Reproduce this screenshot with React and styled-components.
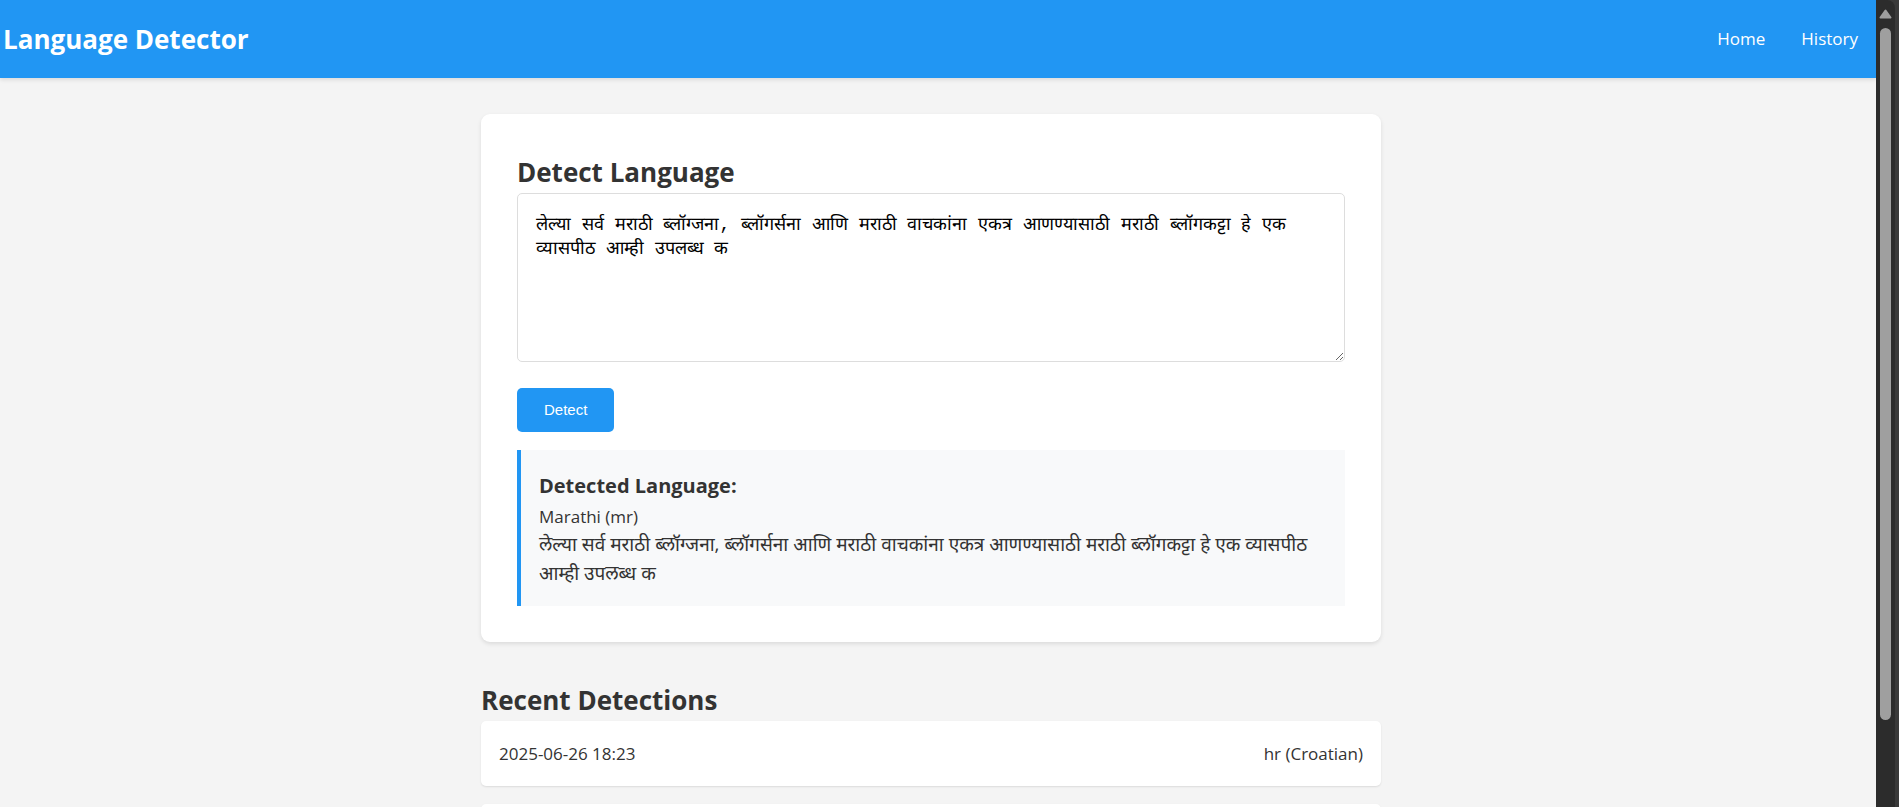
import React, { useState } from "react";
import styled, { createGlobalStyle } from "styled-components";

const GlobalStyle = createGlobalStyle`
  *, *::before, *::after { box-sizing: border-box; }
  body {
    margin: 0;
    background: #f4f4f4;
    color: #333;
    font-family: "Segoe UI", "Open Sans", "Noto Sans", sans-serif;
    font-size: 17px;
    line-height: 29px;
  }
  h1, h2, h3, p, ul { margin: 0; padding: 0; }
`;

const Shell = styled.div`
  display: flex;
  height: 100vh;
  overflow: hidden;
`;

const Page = styled.div`
  flex: 1;
  min-width: 0;
  overflow: hidden;
`;

const Header = styled.header`
  display: flex;
  align-items: center;
  justify-content: space-between;
  min-height: 78px;
  padding: 0 18px 0 3px;
  background: #2196f3;
  color: #fff;
  box-shadow: 0 2px 4px rgba(0, 0, 0, 0.1);
`;

const Brand = styled.h1`
  font-size: 26px;
  line-height: 43px;
  font-weight: 700;
`;

const Nav = styled.nav`
  display: flex;
  gap: 36px;
  padding-bottom: 2px;
`;

const NavLink = styled.a`
  color: #fff;
  text-decoration: none;
`;

const Main = styled.main`
  padding: 36px 14px 0 0;
`;

const Container = styled.div`
  width: 100%;
  max-width: 900px;
  margin: 0 auto;
`;

const Card = styled.section`
  padding: 36px;
  background: #fff;
  border-radius: 9px;
  box-shadow: 0 2px 4px rgba(0, 0, 0, 0.1);
`;

const Heading = styled.h2`
  && { padding-top: 2px; }
  font-size: 26px;
  line-height: 41px;
  font-weight: 700;
`;

const Form = styled.form`
  display: flex;
  flex-direction: column;
  align-items: flex-start;
`;

const TextInput = styled.textarea`
  width: 100%;
  height: 169px;
  margin-bottom: 26px;
  padding: 19px 18px 18px;
  border: 1px solid #ddd;
  border-radius: 5px;
  background: #fff;
  color: #000;
  font-family: "Liberation Mono", monospace;
  font-size: 18px;
  line-height: 24px;
  resize: vertical;
`;

const DetectButton = styled.button`
  height: 44px;
  padding: 0 27px 2px;
  border: none;
  border-radius: 5px;
  background: #2196f3;
  color: #fff;
  font-family: "Liberation Sans", Arial, sans-serif;
  font-size: 15px;
`;

const Result = styled.div`
  margin-top: 18px;
  padding: 18px;
  border-left: 4px solid #2196f3;
  background: #f8f9fa;
`;

const ResultTitle = styled.h3`
  font-size: 20px;
  line-height: 35px;
  font-weight: 700;
`;

const LanguageName = styled.p`
  line-height: 27px;
`;

const Sample = styled.p`
  font-size: 19px;
`;

const History = styled.section`
  margin-top: 36px;
`;

const HistoryList = styled.ul`
  display: flex;
  flex-direction: column;
  gap: 18px;
  list-style: none;
`;

const HistoryItem = styled.li`
  display: flex;
  justify-content: space-between;
  min-height: 65px;
  padding: 18px;
  border-radius: 5px;
  background: #fff;
  box-shadow: 0 1px 2px rgba(0, 0, 0, 0.1);
`;

const ScrollEdge = styled.div`
  display: flex;
  width: 23px;
  padding-right: 4px;
  background: #3a3a3a;
`;

const ScrollTrack = styled.div`
  display: flex;
  flex: 1;
  flex-direction: column;
  align-items: center;
  background: #2c2c2c;
  border-top-right-radius: 8px;
`;

const ScrollArrow = styled.svg`
  flex: none;
  width: 13px;
  height: 28px;
`;

const ScrollThumb = styled.div`
  flex: 8;
  width: 11px;
  border-radius: 6px;
  background: #9f9f9f;
`;

const ScrollRest = styled.div`
  flex: 1;
`;

const SAMPLE =
  "लेल्या सर्व मराठी ब्लॉग्जना, ब्लॉगर्सना आणि मराठी वाचकांना एकत्र आणण्यासाठी मराठी ब्लॉगकट्टा हे एक व्यासपीठ आम्ही उपलब्ध क";

const detections = [{ time: "2025-06-26 18:23", language: "hr (Croatian)" }, {}];

export default function App() {
  const [text, setText] = useState(SAMPLE);

  return (
    <Shell>
      <GlobalStyle />
      <Page>
        <Header>
          <Brand>Language Detector</Brand>
          <Nav>
            <NavLink href="#home">Home</NavLink>
            <NavLink href="#history">History</NavLink>
          </Nav>
        </Header>
        <Main>
          <Container>
            <Card>
              <Heading id="detect-title">Detect Language</Heading>
              <Form onSubmit={(event) => event.preventDefault()}>
                <TextInput
                  aria-labelledby="detect-title"
                  spellCheck={false}
                  value={text}
                  onChange={(event) => setText(event.target.value)}
                />
                <DetectButton type="submit">Detect</DetectButton>
              </Form>
              <Result>
                <ResultTitle>Detected Language:</ResultTitle>
                <LanguageName>Marathi (mr)</LanguageName>
                <Sample lang="mr">{SAMPLE}</Sample>
              </Result>
            </Card>
            <History id="history">
              <Heading>Recent Detections</Heading>
              <HistoryList>
                {detections.map((item, index) => (
                  <HistoryItem key={index}>
                    <span>{item.time}</span>
                    <span>{item.language}</span>
                  </HistoryItem>
                ))}
              </HistoryList>
            </History>
          </Container>
        </Main>
      </Page>
      <ScrollEdge aria-hidden="true">
        <ScrollTrack>
          <ScrollArrow viewBox="0 0 13 28">
            <path
              d="M6.5 10.5 11.5 17.5H1.5Z"
              fill="#9f9f9f"
              stroke="#9f9f9f"
              strokeWidth="2"
              strokeLinejoin="round"
            />
          </ScrollArrow>
          <ScrollThumb />
          <ScrollRest />
        </ScrollTrack>
      </ScrollEdge>
    </Shell>
  );
}
